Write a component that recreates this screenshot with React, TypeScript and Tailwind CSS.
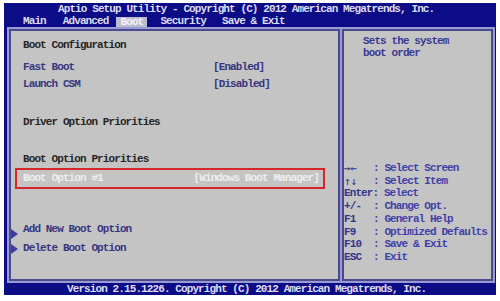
const mono = { fontFamily: '"Liberation Mono", "DejaVu Sans Mono", monospace' };

const help: [string, string][] = [
  ["→←", "Select Screen"],
  ["↑↓", "Select Item"],
  ["Enter", "Select"],
  ["+/-", "Change Opt."],
  ["F1", "General Help"],
  ["F9", "Optimized Defaults"],
  ["F10", "Save & Exit"],
  ["ESC", "Exit"],
];

const Arrow = () => (
  <svg width="7" height="10" viewBox="0 0 7 10" className="shrink-0">
    <path d="M0 0 L7 5 L0 10 Z" fill="#3c3ca0" />
  </svg>
);

export default function App() {
  return (
    <div
      className="w-[500px] h-[301px] bg-white pt-[3px] pl-[4px] pr-[4px] pb-[6px] text-[11px] leading-none tracking-[-0.9px] font-bold"
      style={mono}
    >
      <div className="h-full flex flex-col bg-[#0c0c86]">
        {/* header */}
        <div className="h-[12px] flex items-center pl-[54px] text-[#dcdcf2] whitespace-pre">
          Aptio Setup Utility - Copyright (C) 2012 American Megatrends, Inc.
        </div>
        <div className="h-[12px] flex items-end text-[#dcdcf2] whitespace-pre">
          <span className="ml-[19px]">Main</span>
          <span className="ml-[17px]">Advanced</span>
          <span className="ml-[8px] h-[10px] w-[31px] flex items-center justify-center bg-[#bcbcd0] text-[#f2f2f8]">
            Boot
          </span>
          <span className="ml-[13px]">Security</span>
          <span className="ml-[16px]">Save &amp; Exit</span>
        </div>

        {/* body */}
        <div className="flex-1 ml-[3px] mr-px bg-[#9a9ad4] p-[2px] flex gap-[2px]">
          <div className="w-[331px] border-2 border-[#4a4a8e] bg-[#c4c4c4] pt-[6px] flex flex-col">
            <div className="h-[17px] flex items-center pl-[12px] text-[#262626]">Boot Configuration</div>
            <div className="mt-[5px] h-[17px] flex items-center pl-[12px] text-[#36367e]">
              <span className="w-[190px]">Fast Boot</span>
              <span>[Enabled]</span>
            </div>
            <div className="h-[17px] flex items-center pl-[12px] text-[#36367e]">
              <span className="w-[190px]">Launch CSM</span>
              <span>[Disabled]</span>
            </div>
            <div className="mt-[21px] h-[17px] flex items-center pl-[12px] text-[#262626]">Driver Option Priorities</div>
            <div className="mt-[20px] h-[17px] flex items-center pl-[12px] text-[#262626]">Boot Option Priorities</div>
            <div className="ml-[4px] mr-[13px] h-[21px] border-2 border-[#d6262a] flex items-center justify-between pl-[6px] pr-[4px] text-[#eeeeee]">
              <span>Boot Option #1</span>
              <span>[Windows Boot Manager]</span>
            </div>
            <div className="mt-[32px] h-[17px] flex items-center text-[#36367e]">
              <span className="mt-[8px]"><Arrow /></span>
              <span className="ml-[5px]">Add New Boot Option</span>
            </div>
            <div className="mt-[2px] h-[17px] flex items-center text-[#36367e]">
              <Arrow />
              <span className="ml-[5px]">Delete Boot Option</span>
            </div>
          </div>

          <div className="flex-1 border-2 border-[#4a4a8e] bg-[#c4c4c4] flex flex-col">
            <div className="pt-[4px] pl-[19px] text-[#3a3a94] flex flex-col">
              <div className="h-[12.5px] flex items-center">Sets the system</div>
              <div className="h-[12.5px] flex items-center">boot order</div>
            </div>
            <div className="mt-[102px] flex flex-col">
              {help.map(([k, t]) => (
                <div key={k} className="h-[12.75px] flex items-center whitespace-pre">
                  {k === "Enter" ? (
                    <span className="text-[#34348a]">
                      Enter:<span className="text-[#4040a8]"> Select</span>
                    </span>
                  ) : (
                    <>
                      <span
                        className="w-[29px] text-[#34348a]"
                        style={k === "→←" || k === "↑↓" ? { fontFamily: '"DejaVu Sans Mono", monospace', letterSpacing: "0px", fontWeight: 400 } : undefined}
                      >
                        {k}
                      </span>
                      <span className="text-[#4040a8]">: {t}</span>
                    </>
                  )}
                </div>
              ))}
            </div>
          </div>
        </div>

        {/* footer */}
        <div className="h-[12px] flex items-center pl-[63px] text-[#dcdcf2] whitespace-pre">
          Version 2.15.1226. Copyright (C) 2012 American Megatrends, Inc.
        </div>
      </div>
    </div>
  );
}
